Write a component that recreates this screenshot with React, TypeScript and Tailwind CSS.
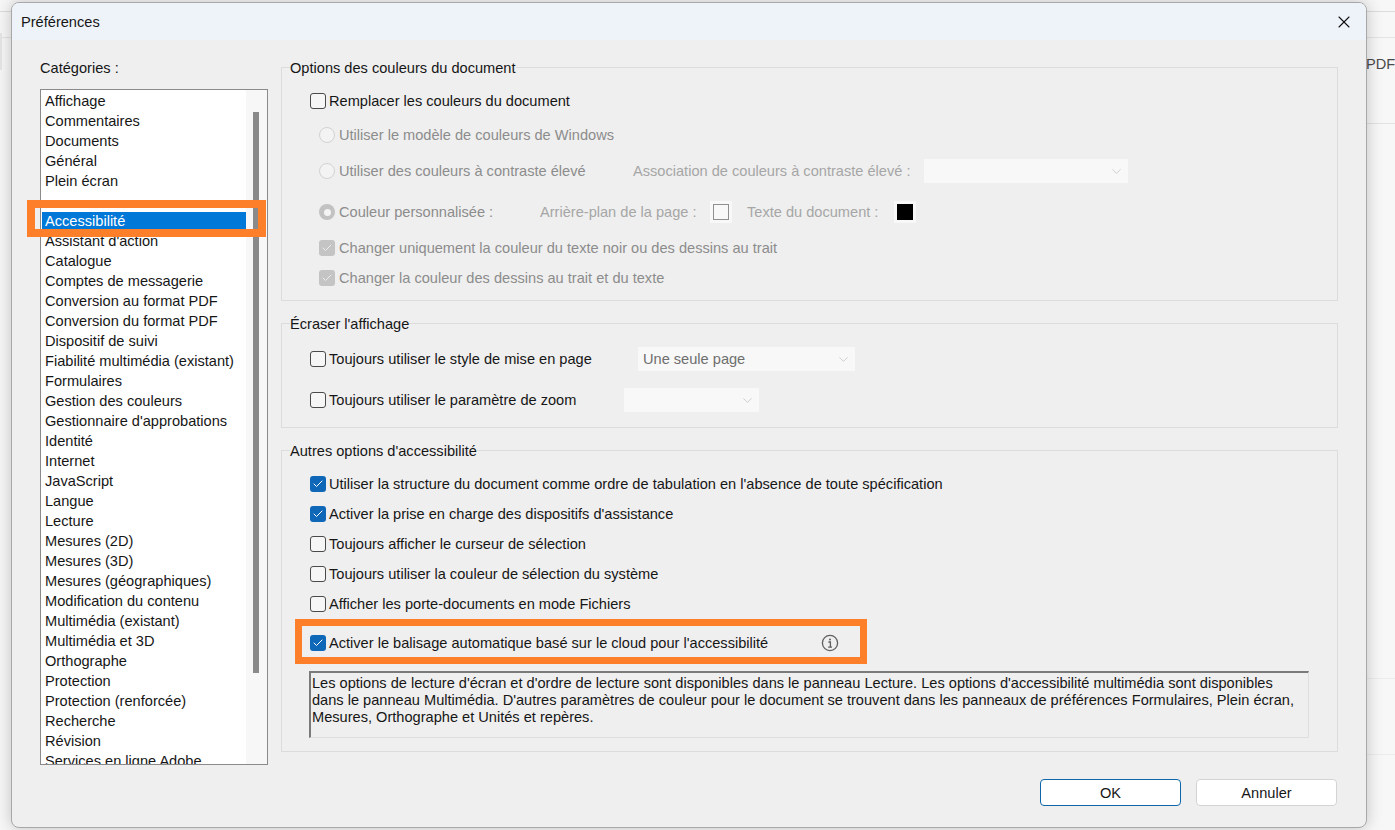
import { Check, ChevronDown, X } from "lucide-react";

const CATEGORIES = [
  "Affichage", "Commentaires", "Documents", "Général", "Plein écran", "",
  "Accessibilité", "Assistant d'action", "Catalogue", "Comptes de messagerie",
  "Conversion au format PDF", "Conversion du format PDF", "Dispositif de suivi",
  "Fiabilité multimédia (existant)", "Formulaires", "Gestion des couleurs",
  "Gestionnaire d'approbations", "Identité", "Internet", "JavaScript", "Langue",
  "Lecture", "Mesures (2D)", "Mesures (3D)", "Mesures (géographiques)",
  "Modification du contenu", "Multimédia (existant)", "Multimédia et 3D",
  "Orthographe", "Protection", "Protection (renforcée)", "Recherche", "Révision",
  "Services en ligne Adobe",
];

function CheckBox({ checked = false, disabled = false }: { checked?: boolean; disabled?: boolean }) {
  if (disabled) {
    return (
      <span className="flex h-4 w-4 shrink-0 items-center justify-center rounded-[3px] bg-[#c4c4c4]">
        <Check className="h-3 w-3 text-[#ececec]" strokeWidth={2} />
      </span>
    );
  }
  if (checked) {
    return (
      <span className="flex h-4 w-4 shrink-0 items-center justify-center rounded-[3px] bg-[#0f67b8]">
        <Check className="h-3 w-3 text-white" strokeWidth={2} />
      </span>
    );
  }
  return <span className="h-4 w-4 shrink-0 rounded-[3px] border border-[#4a4a4a] bg-[#f6f6f6]" />;
}

function Radio({ selected = false }: { selected?: boolean }) {
  if (selected) {
    return (
      <span className="flex h-4 w-4 shrink-0 items-center justify-center rounded-full bg-[#c2c2c2]">
        <span className="h-[7px] w-[7px] rounded-full bg-[#f4f4f4]" />
      </span>
    );
  }
  return <span className="h-4 w-4 shrink-0 rounded-full border border-[#d2d2d2] bg-[#f3f3f3]" />;
}

function Select({ width, label }: { width: string; label?: string }) {
  return (
    <div className={`flex h-[24px] items-center justify-between bg-[#f8f8f8] pr-[4px] ${width}`}>
      <span className="pl-[5px] text-[#6e6e6e]">{label}</span>
      <ChevronDown className="h-[15px] w-[15px] text-[#b5b5b5]" strokeWidth={1} />
    </div>
  );
}

function Swatch({ color }: { color: string }) {
  return (
    <span className="flex h-[22px] w-[22px] items-center justify-center bg-[#f8f8f8]">
      <span className={`h-4 w-4 ${color}`} />
    </span>
  );
}

function App() {
  return (
    <div className="relative h-[830px] w-[1395px] overflow-hidden bg-[#f7f7f7] font-['Liberation_Sans',Arial,sans-serif] text-[14.6px] leading-5 text-[#161616]">
      {/* Window behind the dialog */}
      <div className="absolute left-0 top-[11px] h-px w-full bg-[#dcdcdc]" />
      <div className="absolute left-0 top-[37px] h-px w-full bg-[#e4e4e4]" />
      <div className="absolute left-0 top-[33px] h-[37px] w-[2px] bg-[#e6e6e6]" />
      <div className="absolute left-[1366px] top-[123px] h-px w-[29px] bg-[#e2e2e2]" />
      <div className="absolute left-[1366px] top-[678px] h-px w-[29px] bg-[#ececec]" />
      <div className="absolute left-[1366px] top-[754px] h-px w-[29px] bg-[#ececec]" />
      <span className="absolute left-[1366px] top-[54px] text-[#4a4a4a]">PDF</span>

      {/* Dialog */}
      <div className="relative ml-[11px] mt-[2px] flex h-[826px] w-[1356px] flex-col overflow-hidden rounded-[8px] border border-[#a8a8a8] bg-[#efefef] shadow-[0_0_16px_rgba(0,0,0,0.22)]">
        <div className="flex h-[37px] shrink-0 items-center justify-between bg-[#eef3f9] pl-[9px] pr-[12px]">
          <span>Préférences</span>
          <X className="h-[20px] w-[20px] text-[#111]" strokeWidth={1.3} />
        </div>

        <div className="flex flex-1 pl-[28px] pt-[18px]">
          {/* Categories */}
          <div className="flex w-[241px] shrink-0 flex-col">
            <div className="h-5">Catégories :</div>
            <div className="mt-[11px] flex h-[676px] w-[228px] overflow-hidden border border-[#8a8a8a] bg-white">
              <div className="flex-1 pl-[4px] pt-px">
                {CATEGORIES.map((name, i) =>
                  name === "Accessibilité" ? (
                    <div key={i} className="-ml-[3px] mt-px mb-px flex h-[18px] items-center bg-[#0078d7] pl-[3px] text-white">
                      {name}
                    </div>
                  ) : (
                    <div key={i} className="h-5 whitespace-nowrap">
                      {name}
                    </div>
                  ),
                )}
              </div>
              <div className="w-[21px] shrink-0 bg-[#f7f7f7] pl-[7px] pt-[22px]">
                <div className="h-[561px] w-[6px] bg-[#8a8a8a]" />
              </div>
            </div>
          </div>

          {/* Options */}
          <div className="-mt-px flex w-[1057px] shrink-0 flex-col">
            <fieldset className="h-[244px] border border-[#dcdcdc] pl-[28px]">
              <legend className="relative top-px -ml-[20px]">Options des couleurs du document</legend>
              <div className="mt-[14px] flex h-5 items-center gap-[3px]">
                <CheckBox />
                <span>Remplacer les couleurs du document</span>
              </div>
              <div className="ml-[9px] text-[#8c8c8c]">
                <div className="mt-[14px] flex h-5 items-center gap-[4px]">
                  <Radio />
                  <span>Utiliser le modèle de couleurs de Windows</span>
                </div>
                <div className="mt-[16px] flex h-5 items-center gap-[4px]">
                  <Radio />
                  <span className="w-[290px]">Utiliser des couleurs à contraste élevé</span>
                  <span className="w-[287px] text-[#a6a6a6]">Association de couleurs à contraste élevé :</span>
                  <Select width="w-[204px]" />
                </div>
                <div className="mt-[21px] flex h-5 items-center gap-[4px]">
                  <Radio selected />
                  <span className="w-[197px]">Couleur personnalisée :</span>
                  <span className="w-[166px] text-[#a6a6a6]">Arrière-plan de la page :</span>
                  <Swatch color="border border-[#8f8f8f] bg-[#f8f8f8]" />
                  <span className="ml-[11px] w-[143px] text-[#a6a6a6]">Texte du document :</span>
                  <Swatch color="bg-black" />
                </div>
                <div className="mt-[16px] flex h-5 items-center gap-[4px]">
                  <CheckBox disabled />
                  <span>Changer uniquement la couleur du texte noir ou des dessins au trait</span>
                </div>
                <div className="mt-[10px] flex h-5 items-center gap-[4px]">
                  <CheckBox disabled />
                  <span>Changer la couleur des dessins au trait et du texte</span>
                </div>
              </div>
            </fieldset>

            <fieldset className="mt-[12px] h-[115px] border border-[#dcdcdc] pl-[28px]">
              <legend className="relative top-px -ml-[20px]">Écraser l'affichage</legend>
              <div className="mt-[16px] flex h-5 items-center gap-[3px]">
                <CheckBox />
                <span className="w-[306px]">Toujours utiliser le style de mise en page</span>
                <Select width="w-[217px]" label="Une seule page" />
              </div>
              <div className="mt-[21px] flex h-5 items-center gap-[3px]">
                <CheckBox />
                <span className="w-[292px]">Toujours utiliser le paramètre de zoom</span>
                <Select width="w-[135px]" />
              </div>
            </fieldset>

            <fieldset className="mt-[12px] h-[312px] border border-[#dcdcdc] pl-[28px]">
              <legend className="relative top-px -ml-[20px]">Autres options d'accessibilité</legend>
              <div className="mt-[14px] flex h-5 items-center gap-[3px]">
                <CheckBox checked />
                <span>Utiliser la structure du document comme ordre de tabulation en l'absence de toute spécification</span>
              </div>
              <div className="mt-[10px] flex h-5 items-center gap-[3px]">
                <CheckBox checked />
                <span>Activer la prise en charge des dispositifs d'assistance</span>
              </div>
              <div className="mt-[10px] flex h-5 items-center gap-[3px]">
                <CheckBox />
                <span>Toujours afficher le curseur de sélection</span>
              </div>
              <div className="mt-[10px] flex h-5 items-center gap-[3px]">
                <CheckBox />
                <span>Toujours utiliser la couleur de sélection du système</span>
              </div>
              <div className="mt-[10px] flex h-5 items-center gap-[3px]">
                <CheckBox />
                <span>Afficher les porte-documents en mode Fichiers</span>
              </div>
              <div className="mt-[19px] flex h-5 items-center gap-[3px]">
                <CheckBox checked />
                <span className="w-[489px]">Activer le balisage automatique basé sur le cloud pour l'accessibilité</span>
                <svg viewBox="0 0 18 18" className="h-[18px] w-[18px] text-[#5f5f5f]" fill="none" stroke="currentColor">
                  <circle cx="9" cy="9" r="7.6" strokeWidth="1.3" />
                  <path d="M7.4 8h2v5M7.2 13.2h3.8" strokeWidth="1.3" />
                  <circle cx="9" cy="5.4" r="1" fill="currentColor" stroke="none" />
                </svg>
              </div>
              <div className="-ml-px mt-[18px] h-[67px] w-[1000px] border border-[#dedede] border-l-2 border-t-2 border-l-[#7a7a7a] border-t-[#7a7a7a] pl-[1px] pt-[2px] leading-[17px]">
                Les options de lecture d'écran et d'ordre de lecture sont disponibles dans le panneau Lecture. Les options d'accessibilité multimédia sont disponibles dans le panneau Multimédia. D'autres paramètres de couleur pour le document se trouvent dans les panneaux de préférences Formulaires, Plein écran, Mesures, Orthographe et Unités et repères.
              </div>
            </fieldset>

            <div className="mt-[27px] flex justify-end gap-[15px] pr-px">
              <button className="h-[27px] w-[141px] rounded-[4px] border border-[#0f67a8] bg-white">OK</button>
              <button className="h-[27px] w-[141px] rounded-[4px] border border-[#d4d4d4] bg-white">Annuler</button>
            </div>
          </div>
        </div>
      </div>

      {/* Annotation frames */}
      <div className="absolute left-[27px] top-[200px] h-[37px] w-[239px] border-[8px] border-[#fd7f2a]" />
      <div className="absolute left-[295px] top-[619px] h-[45px] w-[572px] border-[7px] border-[#fd7f2a]" />
    </div>
  );
}

export default App;
